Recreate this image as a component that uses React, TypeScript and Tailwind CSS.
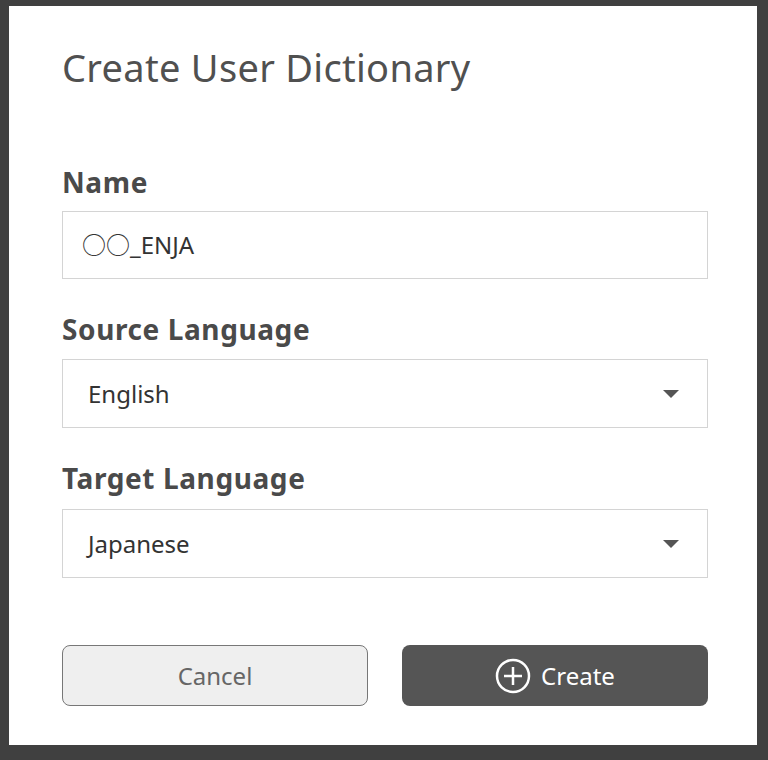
import React from "react";

const Chevron = () => (
  <svg width="18" height="10" viewBox="0 0 18 10" className="absolute right-[27px] top-1/2 -translate-y-1/2">
    <path d="M1 1 L9 9 L17 1 Z" fill="#555" />
  </svg>
);

export default function App() {
  const f = { fontFamily: '"Noto Sans", "Noto Sans CJK JP", sans-serif' };
  return (
    <div className="w-[768px] h-[760px] bg-[#404040] pt-[6px] pl-[9px]" style={f}>
      <div className="w-[748px] h-[739px] bg-white pl-[53px] pr-[49px] flex flex-col">
        <h1 className="text-[38px] leading-none text-[#505050] mt-[42px] tracking-[0.3px]">Create User Dictionary</h1>
        <div className="text-[28px] font-bold text-[#4a4a4a] leading-none mt-[82px] tracking-[0.6px]">Name</div>
        <div className="mt-[15px] h-[68px] border border-[#d4d4d4] flex items-center pl-[19px] text-[24px] text-[#333]">○○_ENJA</div>
        <div className="text-[28px] font-bold text-[#4a4a4a] leading-none mt-[36px] tracking-[0.6px]">Source Language</div>
        <div className="relative mt-[16px] h-[69px] border border-[#d4d4d4] flex items-center pl-[25px] text-[24px] text-[#333]">English<Chevron /></div>
        <div className="text-[28px] font-bold text-[#4a4a4a] leading-none mt-[36px] tracking-[0.6px]">Target Language</div>
        <div className="relative mt-[17px] h-[69px] border border-[#d4d4d4] flex items-center pl-[25px] text-[24px] text-[#333]">Japanese<Chevron /></div>
        <div className="flex gap-[34px] mt-[67px]">
          <button className="w-[306px] h-[61px] rounded-[8px] border border-[#777] bg-[#efefef] text-[24px] text-[#666]">Cancel</button>
          <button className="w-[306px] h-[61px] rounded-[8px] bg-[#555] text-[24px] text-white flex items-center justify-center gap-[10px]">
            <svg width="36" height="36" viewBox="0 0 36 36"><circle cx="18" cy="18" r="16" fill="none" stroke="white" strokeWidth="2.5"/><path d="M18 9v18M9 18h18" stroke="white" strokeWidth="2.5"/></svg>
            Create
          </button>
        </div>
      </div>
    </div>
  );
}
